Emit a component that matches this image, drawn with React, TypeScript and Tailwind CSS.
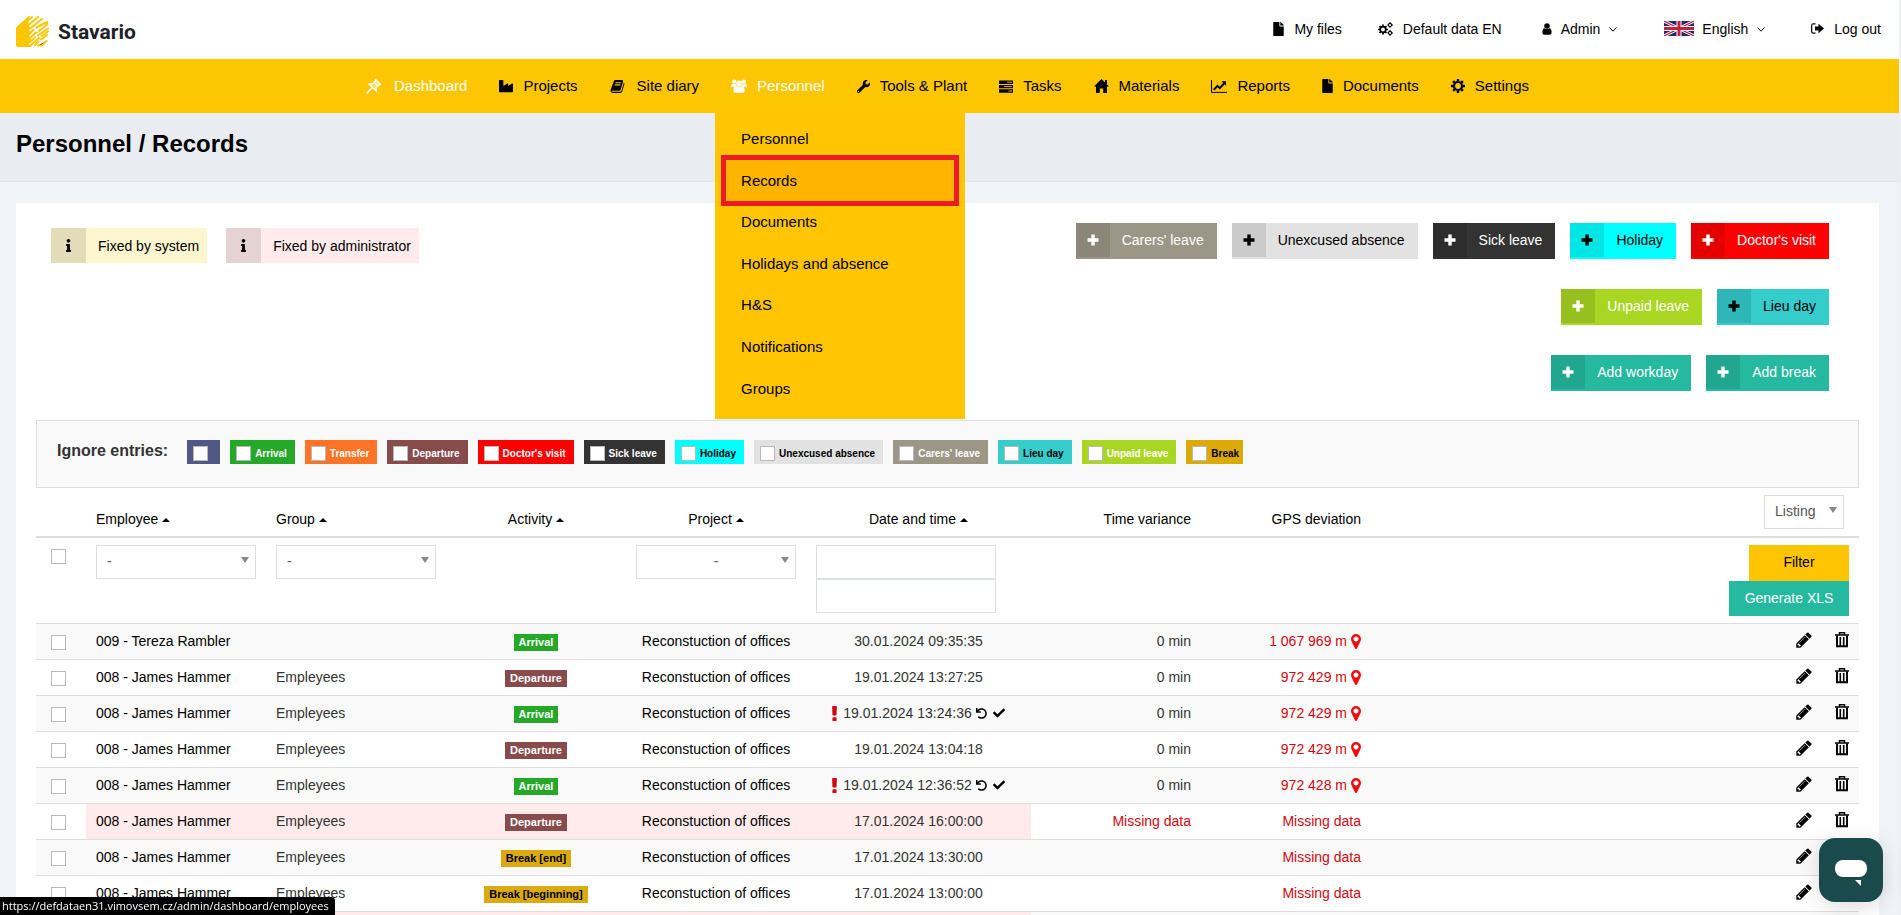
import { useState, type ReactNode } from "react";
import clsx from "clsx";
import { FaCheck, FaFile, FaIndustry, FaInfo, FaUndo, FaWrench } from "react-icons/fa";

interface IconProps {
  className?: string;
}

function PinIcon({ className }: IconProps) {
  return (
    <svg viewBox="0 0 16 16" fill="none" stroke="currentColor" strokeWidth="1.5" strokeLinejoin="round" className={className} aria-hidden="true">
      <path d="M9.500 1.500 14.500 6.500 12.500 7 10 9.800 10.200 13 3 5.800 6.200 6 9 3.500z" fill="currentColor" fillOpacity=".35" />
      <path d="M6.800 9.200 1 15M9.500 5.500l1 1" strokeLinecap="round" />
    </svg>
  );
}

function BookIcon({ className }: IconProps) {
  return (
    <svg viewBox="0 0 1792 1792" fill="currentColor" className={className} aria-hidden="true">
      <path d="M1703 478q40 57 18 129l-275 906q-19 64-76.500 107.500t-122.500 43.500h-923q-77 0-148.500-53.500t-99.500-131.500q-24-67-2-127 0-4 3-27t4-37q1-8-3-21.500t-3-19.500q2-11 8-21t16.500-23.500 16.500-23.500q23-38 45-91.500t30-91.500q3-10 .5-30t-.5-28q3-11 17-28t17-23q21-36 42-92t25-90q1-9-2.500-32t.5-28q4-13 22-30.500t22-22.500q19-26 42.500-84.500t27.500-96.500q1-8-3-25.500t-2-26.500q2-8 9-18t18-23 17-21q8-12 16.500-30.500t15-35 16-36 19.500-32 26.500-23.500 36-11.500 47.500 5.500l-1 3q38-9 51-9h761q74 0 114 56t18 130l-274 906q-36 119-71.500 153.500t-128.500 34.500h-869q-27 0-38 15-11 16-1 43 24 70 144 70h923q29 0 56-15.500t35-41.500l300-987q7-22 5-57 38 15 59 43zm-1064 2q-4 13 2 22.500t20 9.500h608q13 0 25.500-9.500t16.500-22.500l21-64q4-13-2-22.500t-20-9.500h-608q-13 0-25.500 9.500t-16.500 22.500zm-83 256q-4 13 2 22.500t20 9.500h608q13 0 25.500-9.500t16.500-22.500l21-64q4-13-2-22.500t-20-9.500h-608q-13 0-25.500 9.500t-16.500 22.500z" />
    </svg>
  );
}

function UsersIcon({ className }: IconProps) {
  return (
    <svg viewBox="0 0 16 14" fill="currentColor" className={className} aria-hidden="true">
      <circle cx="3.200" cy="2.600" r="2.200" />
      <circle cx="12.800" cy="2.600" r="2.200" />
      <circle cx="8" cy="4.500" r="2.900" />
      <path d="M.3 8.500V6.300q0-1.300 1.300-1.300h3q.3 2 1.600 3H.8zM15.700 8.500V6.300q0-1.300-1.300-1.300h-3q-.3 2-1.600 3h5.400z" />
      <path d="M2.500 12.300V10q0-2.600 2.600-2.600h5.800q2.600 0 2.600 2.600v2.300q0 1.400-1.400 1.400H3.900q-1.400 0-1.400-1.400z" />
    </svg>
  );
}

function TasksIcon({ className }: IconProps) {
  return (
    <svg viewBox="0 0 14 13" className={className} aria-hidden="true">
      <path fill="currentColor" d="M0 .5h14v3.400H0zM0 4.900h14v3.400H0zM0 9.300h14v3.400H0z" />
      <path stroke="#fcc602" strokeWidth=".9" d="M8 2.200h5M5 6.600h8M9.500 11H13" />
    </svg>
  );
}

function HomeIcon({ className }: IconProps) {
  return (
    <svg viewBox="0 0 15 14" fill="currentColor" className={className} aria-hidden="true">
      <path d="M7.500 0 15 7.500h-2V14H9.200V9.500H5.800V14H2V7.500H0z" />
      <path d="M11 1h2v4h-2z" />
    </svg>
  );
}

function ChartIcon({ className }: IconProps) {
  return (
    <svg viewBox="0 0 16 13" fill="none" stroke="currentColor" className={className} aria-hidden="true">
      <path d="M.5 0v12.400H16" />
      <path d="m2.800 9.800 3.700-3.900 2.300 2.200L13 3.500" strokeWidth="2" />
      <path d="M10.500 1.200H15v4.500z" fill="currentColor" stroke="none" />
    </svg>
  );
}

function CogIcon({ className }: IconProps) {
  return (
    <svg viewBox="0 0 14 14" fill="none" stroke="currentColor" className={className} aria-hidden="true">
      <circle cx="7" cy="7" r="4" strokeWidth="2.200" />
      <path d="M7 0v2.500M7 11.500V14M0 7h2.500M11.500 7H14M2.100 2.100l1.700 1.700M10.200 10.200l1.700 1.700M11.900 2.100l-1.700 1.700M3.800 10.200l-1.700 1.700" strokeWidth="2.400" />
    </svg>
  );
}

function CogsIcon({ className }: IconProps) {
  return (
    <svg viewBox="0 0 15 14" fill="none" stroke="currentColor" className={className} aria-hidden="true">
      <circle cx="5" cy="7.500" r="2.800" strokeWidth="1.700" />
      <path d="M5 2.500v2M5 10.500v2M0 7.500h2M8 7.500h2M1.500 4l1.400 1.400M7.100 9.600 8.500 11M8.500 4 7.100 5.400M2.900 9.600 1.500 11" strokeWidth="1.700" />
      <circle cx="12" cy="3" r="1.600" strokeWidth="1.100" />
      <circle cx="12" cy="11" r="1.600" strokeWidth="1.100" />
      <path d="M12 .2v1M12 4.800v1M9.500 3h.9M13.700 3h1M12 8.200v1M12 12.800v1M9.500 11h.9M13.700 11h1" strokeWidth="1.300" />
    </svg>
  );
}

function UserIcon({ className }: IconProps) {
  return (
    <svg viewBox="0 0 10 13" fill="currentColor" className={className} aria-hidden="true">
      <circle cx="5" cy="3.200" r="3" />
      <path d="M0 10.200Q0 5.800 2.400 5.600 5 7.600 7.600 5.600 10 5.800 10 10.200q0 2.500-2 2.500H2q-2 0-2-2.500z" />
    </svg>
  );
}

function SignOutIcon({ className }: IconProps) {
  return (
    <svg viewBox="0 0 13 11" className={className} aria-hidden="true">
      <path fill="none" stroke="currentColor" strokeWidth="1.200" d="M4.500.8H2.300Q.7.800.7 2.400v6.200q0 1.600 1.600 1.600h2.200" />
      <path fill="currentColor" d="M4 3.500h3.500V.8L13 5.500l-5.500 4.700V7.500H4z" />
    </svg>
  );
}

function ChevronIcon({ className }: IconProps) {
  return (
    <svg viewBox="0 0 8 5" fill="none" stroke="currentColor" className={className} aria-hidden="true">
      <path d="M.5.5 4 4.200 7.500.5" />
    </svg>
  );
}

function PlusIcon({ className }: IconProps) {
  return (
    <svg viewBox="0 0 12 12" fill="currentColor" className={className} aria-hidden="true">
      <path d="M4.300.5h3.400v3.800h3.800v3.400H7.700v3.800H4.300V7.700H.5V4.300h3.800z" />
    </svg>
  );
}

function ExclamationIcon({ className }: IconProps) {
  return (
    <svg viewBox="670 128 452 1408" fill="currentColor" className={className} aria-hidden="true">
      <path d="M1088 1248v224q0 26-19 45t-45 19h-256q-26 0-45-19t-19-45v-224q0-26 19-45t45-19h256q26 0 45 19t19 45zm30-1056l-28 768q-1 26-20.500 45t-45.500 19h-256q-26 0-45.500-19t-20.500-45l-28-768q-1-26 17.500-45t44.500-19h320q26 0 44.500 19t17.500 45z" />
    </svg>
  );
}

function MarkerIcon({ className }: IconProps) {
  return (
    <svg viewBox="384 128 1024 1536" fill="currentColor" className={className} aria-hidden="true">
      <path d="M1152 640q0-106-75-181t-181-75-181 75-75 181 75 181 181 75 181-75 75-181zm256 0q0 109-33 179l-364 774q-16 33-47.500 52t-67.500 19-67.500-19-46.500-52l-365-774q-33-70-33-179 0-212 150-362t362-150 362 150 150 362z" />
    </svg>
  );
}

function PencilIcon({ className }: IconProps) {
  return (
    <svg viewBox="0 0 1792 1792" fill="currentColor" className={className} aria-hidden="true">
      <path d="M491 1536l91-91-235-235-91 91v107h128v128h107zm523-928q0-22-22-22-10 0-17 7l-542 542q-7 7-7 17 0 22 22 22 10 0 17-7l542-542q7-7 7-17zm-54-192l416 416-832 832h-416v-416zm683 96q0 53-37 90l-166 166-416-416 166-165q36-38 90-38 53 0 91 38l235 234q37 39 37 91z" />
    </svg>
  );
}

function TrashIcon({ className }: IconProps) {
  return (
    <svg viewBox="0 0 14 16" fill="none" stroke="currentColor" className={className} aria-hidden="true">
      <path d="M0 3h14M4.500 2.800V.8h5v2" strokeWidth="1.500" />
      <path d="M2 3.500v10.700h10V3.500" strokeWidth="2" />
      <path d="M5.300 5v9M8.700 5v9" strokeWidth="1.600" />
    </svg>
  );
}

function UnionJack({ className }: IconProps) {
  return (
    <svg viewBox="0 0 60 30" preserveAspectRatio="none" className={className} aria-hidden="true">
      <path fill="#1b2a6b" d="M0 0h60v30H0z" />
      <path stroke="#fff" strokeWidth="6" d="m0 0 60 30M60 0 0 30" />
      <path stroke="#c8203c" strokeWidth="2.500" d="m0 0 60 30M60 0 0 30" />
      <path stroke="#fff" strokeWidth="10" d="M30 0v30M0 15h60" />
      <path stroke="#c8203c" strokeWidth="6" d="M30 0v30M0 15h60" />
    </svg>
  );
}

function LogoMark({ className }: IconProps) {
  return (
    <svg viewBox="0 0 34 31" className={className} aria-hidden="true">
      <path fill="#fcc602" d="M0 12.500q0-1 .8-1.800L11.500 1q1-1 2.500-1l-1 4-1 6 3 1-2 4 3 1-3 5 2 2-2 5 3 3H2q-2 0-2-2z" />
      <g stroke="#fcc602" strokeWidth="2" strokeLinecap="round">
        <path d="m11 5 5-4M12 9.500 22 1M14 12.500 26 3M14 17l3.500-3.200M20.500 11.500 31 6M14 22l6-5.500M23 15l8.500-7M14 26l5-4.500M22 19.500l10-7M15 29l8-7M25.500 20l6.500-4.500M19 29l3.500-3.500M25 23.500l6-4.500M22 29.500h4l4.500-4.500" />
      </g>
      <circle cx="21" cy="16.500" r="1" fill="#fcc602" />
    </svg>
  );
}

const NAV_ITEMS = [
  { label: "Dashboard", icon: <PinIcon className="mr-[2px] size-4" />, light: true },
  { label: "Projects", icon: <FaIndustry className="size-[14px]" /> },
  { label: "Site diary", icon: <BookIcon className="mr-[2px] size-[15px]" /> },
  { label: "Personnel", icon: <UsersIcon className="h-[14px] w-4" />, light: true, open: true },
  { label: "Tools & Plant", icon: <FaWrench className="size-[13px]" /> },
  { label: "Tasks", icon: <TasksIcon className="h-[13px] w-[14px]" /> },
  { label: "Materials", icon: <HomeIcon className="h-[14px] w-[15px]" /> },
  { label: "Reports", icon: <ChartIcon className="h-[13px] w-4" /> },
  { label: "Documents", icon: <FaFile className="h-[14px] w-[11px]" /> },
  { label: "Settings", icon: <CogIcon className="size-[14px]" /> },
];

const PERSONNEL_MENU = ["Personnel", "Records", "Documents", "Holidays and absence", "H&S", "Notifications", "Groups"];

const ADD_BUTTONS = [
  [
    { label: "Carers' leave", color: "bg-[#9c9686] text-white" },
    { label: "Unexcused absence", color: "bg-[#e2e2e2] text-black" },
    { label: "Sick leave", color: "bg-[#333333] text-white" },
    { label: "Holiday", color: "bg-[#00ffff] text-black" },
    { label: "Doctor's visit", color: "bg-[#ff0000] text-white" },
  ],
  [
    { label: "Unpaid leave", color: "bg-[#a9d622] text-white" },
    { label: "Lieu day", color: "bg-[#35cccc] text-black" },
  ],
  [
    { label: "Add workday", color: "bg-[#25b9a0] text-white" },
    { label: "Add break", color: "bg-[#25b9a0] text-white" },
  ],
];

const IGNORE_TAGS = [
  { label: "", color: "bg-[#525885] text-white" },
  { label: "Arrival", color: "bg-[#25a827] text-white" },
  { label: "Transfer", color: "bg-[#ff7326] text-white" },
  { label: "Departure", color: "bg-[#874b4b] text-white" },
  { label: "Doctor's visit", color: "bg-[#ff0000] text-white" },
  { label: "Sick leave", color: "bg-[#333333] text-white" },
  { label: "Holiday", color: "bg-[#00ffff] text-black" },
  { label: "Unexcused absence", color: "bg-[#e2e2e2] text-black" },
  { label: "Carers' leave", color: "bg-[#9c9686] text-white" },
  { label: "Lieu day", color: "bg-[#35cccc] text-black" },
  { label: "Unpaid leave", color: "bg-[#a9d622] text-white" },
  { label: "Break", color: "bg-[#dbaa06] text-black" },
];

const ACTIVITY_COLORS: Record<string, string> = {
  Arrival: "bg-[#25a827] text-white",
  Departure: "bg-[#874b4b] text-white",
  "Break [end]": "bg-[#d9ab10] text-black",
  "Break [beginning]": "bg-[#d9ab10] text-black",
};

interface RecordRow {
  employee: string;
  group: string;
  activity: string;
  date: string;
  variance: string;
  gps: string;
  fixed?: boolean;
  edited?: boolean;
}

const HAMMER = "008 - James Hammer";

const ROWS: RecordRow[] = [
  { employee: "009 - Tereza Rambler", group: "", activity: "Arrival", date: "30.01.2024 09:35:35", variance: "0 min", gps: "1 067 969 m" },
  { employee: HAMMER, group: "Empleyees", activity: "Departure", date: "19.01.2024 13:27:25", variance: "0 min", gps: "972 429 m" },
  { employee: HAMMER, group: "Empleyees", activity: "Arrival", date: "19.01.2024 13:24:36", variance: "0 min", gps: "972 429 m", edited: true },
  { employee: HAMMER, group: "Empleyees", activity: "Departure", date: "19.01.2024 13:04:18", variance: "0 min", gps: "972 429 m" },
  { employee: HAMMER, group: "Empleyees", activity: "Arrival", date: "19.01.2024 12:36:52", variance: "0 min", gps: "972 428 m", edited: true },
  { employee: HAMMER, group: "Empleyees", activity: "Departure", date: "17.01.2024 16:00:00", variance: "Missing data", gps: "Missing data", fixed: true },
  { employee: HAMMER, group: "Empleyees", activity: "Break [end]", date: "17.01.2024 13:30:00", variance: "", gps: "Missing data" },
  { employee: HAMMER, group: "Empleyees", activity: "Break [beginning]", date: "17.01.2024 13:00:00", variance: "", gps: "Missing data" },
  { employee: "", group: "", activity: "", date: "", variance: "", gps: "", fixed: true },
];

const CHECKBOX = "block size-[15px] appearance-none border border-[#b9b9b9] bg-white checked:bg-[#25b9a0]";

function TopLink({ icon, children, className }: { icon: ReactNode; children: ReactNode; className?: string }) {
  return (
    <a href="#" className={clsx("flex items-center", className)}>
      {icon}
      {children}
    </a>
  );
}

function InfoBadge({ label, color }: { label: string; color: string }) {
  return (
    <div className={clsx("flex h-[35px] items-center pr-2", color)}>
      <span className="mr-3 flex h-full w-[35px] items-center justify-center bg-black/10">
        <FaInfo className="size-[13px]" />
      </span>
      {label}
    </div>
  );
}

function AddButton({ label, color }: { label: string; color: string }) {
  return (
    <button type="button" className={clsx("flex h-9 items-start pr-[13px] leading-[34px]", color)}>
      <span className="mr-3 flex h-[34px] w-[34px] items-center justify-center bg-black/10">
        <PlusIcon className="size-3" />
      </span>
      {label}
    </button>
  );
}

function SelectBox({ label, option, className }: { label: string; option: string; className: string }) {
  return (
    <div className={clsx("relative h-[34px]", className)}>
      <select
        aria-label={label}
        className="h-full w-full appearance-none border border-[#dcdfe0] bg-white px-[10px] pb-[2px] text-[#555] [text-align:inherit] [text-align-last:inherit]"
      >
        <option>{option}</option>
      </select>
      <svg viewBox="0 0 8 6" className="pointer-events-none absolute top-3 right-[7px] h-[6px] w-2" aria-hidden="true">
        <path fill="#888" d="M0 0h8L4 6z" />
      </svg>
    </div>
  );
}

function SortHeader({ children }: { children: ReactNode }) {
  return (
    <button type="button" className="inline-flex items-center gap-1">
      {children}
      <svg viewBox="0 0 8 4" className="mt-[2px] h-1 w-2" aria-hidden="true">
        <path d="M0 4 4 0l4 4z" />
      </svg>
    </button>
  );
}

function RecordLine({ row, index }: { row: RecordRow; index: number }) {
  const tint = row.fixed && "bg-[#ffebeb]";

  return (
    <tr className="h-9 border-t border-[#ddd] odd:bg-[#f9f9f9]">
      <td className="pt-[2px] pl-[15px]">
        <input type="checkbox" aria-label={`Select record ${index + 1}`} className={CHECKBOX} />
      </td>
      <td className={clsx("px-[10px] text-black", tint)}>{row.employee}</td>
      <td className={clsx("px-[10px]", tint)}>{row.group}</td>
      <td className={clsx("text-center", tint)}>
        <span className={clsx("inline-block px-[5px] text-[11px] leading-[17px] font-bold", ACTIVITY_COLORS[row.activity])}>{row.activity}</span>
      </td>
      <td className={clsx("text-center text-black", tint)}>{row.employee ? "Reconstuction of offices" : null}</td>
      <td className={tint || undefined}>
        <span className="flex items-center justify-center">
          {row.edited ? <ExclamationIcon className="mr-[6px] h-[15px] w-[5px] text-[#d0080f]" /> : null}
          {row.date}
          {row.edited ? (
            <>
              <FaUndo className="mr-[6px] ml-1 size-[11px] text-black" />
              <FaCheck className="size-3 text-black" />
            </>
          ) : null}
        </span>
      </td>
      <td className={clsx("px-[10px] text-right", row.variance === "Missing data" && "text-[#d0080f]")}>{row.variance}</td>
      <td className="px-[10px] text-[#d0080f]">
        <span className="flex items-center justify-end gap-1">
          {row.gps}
          {row.gps.endsWith(" m") ? <MarkerIcon className="h-[15px] w-[10px] text-[#ee1010]" /> : null}
        </span>
      </td>
      <td className="px-[10px] pb-[2px]">
        <span className="flex items-center justify-end gap-[22px] text-black">
          <button type="button" aria-label="Edit">
            <PencilIcon className="size-[18px]" />
          </button>
          <button type="button" aria-label="Delete">
            <TrashIcon className="h-4 w-[14px]" />
          </button>
        </span>
      </td>
    </tr>
  );
}

export default function App() {
  const [menuOpen, setMenuOpen] = useState(true);

  return (
    <div className="h-screen overflow-y-auto border-r-2 border-[#eceef0] bg-[#f0f4f9] font-['Liberation_Sans',Arial,sans-serif] text-sm text-[#333] [scrollbar-width:none]">
      <header className="flex h-[59px] items-center justify-between bg-white pr-[18px] pl-4 text-black">
        <a href="#" className="flex items-center gap-2 pt-1 font-['Roboto',sans-serif] text-[21px] font-bold text-[#1c2227]">
          <LogoMark className="h-[31px] w-[34px]" />
          Stavario
        </a>
        <div className="flex items-center pb-[2px]">
          <TopLink icon={<FaFile className="mr-[10px] h-[14px] w-[11px]" />}>My files</TopLink>
          <TopLink className="ml-9" icon={<CogsIcon className="mr-[10px] h-[14px] w-[15px]" />}>Default data EN</TopLink>
          <TopLink className="ml-10" icon={<UserIcon className="mr-[9px] h-3 w-[10px]" />}>
            Admin
            <ChevronIcon className="mt-[2px] ml-[9px] h-[5px] w-2" />
          </TopLink>
          <TopLink className="ml-[47px]" icon={<UnionJack className="mr-2 h-[15px] w-[30px]" />}>
            English
            <ChevronIcon className="mt-[2px] ml-[9px] h-[5px] w-2" />
          </TopLink>
          <TopLink className="ml-[46px]" icon={<SignOutIcon className="mr-[10px] h-[11px] w-[13px]" />}>Log out</TopLink>
        </div>
      </header>

      <nav className="flex h-[54px] justify-center bg-[#fcc602] pr-1 text-[15px] text-black">
        {NAV_ITEMS.map((item) => (
          <div key={item.label} className="relative flex">
            <a
              href="#"
              onClick={item.open ? () => setMenuOpen(!menuOpen) : undefined}
              className={clsx("flex items-center gap-[10px] px-4", item.light && "text-white")}
            >
              {item.icon}
              {item.label}
            </a>
            {item.open && menuOpen ? (
              <ul className="absolute top-full left-0 z-10 flex h-[306px] w-[250px] flex-col bg-[#ffc502] pt-[5px] pb-[10px] text-black">
                {PERSONNEL_MENU.map((entry) => (
                  <li key={entry} className="flex-1 px-[11px]">
                    <a
                      href="#"
                      className={clsx("flex h-full items-center px-[15px]", entry === "Records" && "bg-[#ffb400] outline-5 outline-[#ed1c24]")}
                    >
                      {entry}
                    </a>
                  </li>
                ))}
              </ul>
            ) : null}
          </div>
        ))}
      </nav>

      <div className="h-[69px] border-b border-[#dfe3e8] bg-[#e9ecf0] px-4 pt-[15px]">
        <h1 className="text-2xl font-bold text-black">Personnel / Records</h1>
      </div>

      <main className="mt-[21px] mr-5 ml-4 bg-white px-5 pt-5">
        <div className="flex items-start justify-between pr-[30px] pl-[15px] text-black">
          <div className="flex gap-[19px] pt-[5px]">
            <InfoBadge label="Fixed by system" color="bg-[#fdf5ce]" />
            <InfoBadge label="Fixed by administrator" color="bg-[#ffebeb]" />
          </div>
          <div className="flex flex-col items-end gap-[30px]">
            {ADD_BUTTONS.map((group) => (
              <div key={group[0].label} className="flex gap-[15px]">
                {group.map((button) => (
                  <AddButton key={button.label} {...button} />
                ))}
              </div>
            ))}
          </div>
        </div>

        <fieldset className="mt-[29px] flex h-[68px] items-start border border-[#ddd] bg-[#f9f9f9] px-5 pt-[19px]">
          <span className="mr-[19px] text-base leading-[22px] font-bold">Ignore entries:</span>
          <div className="flex gap-[10px]">
            {IGNORE_TAGS.map((tag) => (
              <label key={tag.label} className={clsx("flex h-6 items-center gap-1 pt-[3px] pl-[6px] text-[10px] font-bold last:pr-1", tag.label ? "pr-2" : "pr-3", tag.color)}>
                <input type="checkbox" aria-label={tag.label || "Unnamed"} className={CHECKBOX} />
                {tag.label ? <span className="pt-[2px]">{tag.label}</span> : null}
              </label>
            ))}
          </div>
        </fieldset>

        <table className="w-full table-fixed border-collapse">
          <colgroup>
            <col className="w-[50px]" />
            <col className="w-[180px]" />
            <col className="w-[180px]" />
            <col className="w-[180px]" />
            <col className="w-[180px]" />
            <col className="w-[225px]" />
            <col className="w-[170px]" />
            <col className="w-[170px]" />
            <col />
          </colgroup>
          <thead className="text-black">
            <tr className="h-[49px] border-b-2 border-[#ddd] [&>th]:px-[10px] [&>th]:pt-[13px] [&>th]:font-normal">
              <th />
              <th className="text-left"><SortHeader>Employee</SortHeader></th>
              <th className="text-left"><SortHeader>Group</SortHeader></th>
              <th><SortHeader>Activity</SortHeader></th>
              <th><SortHeader>Project</SortHeader></th>
              <th><SortHeader>Date and time</SortHeader></th>
              <th className="text-right">Time variance</th>
              <th className="text-right">GPS deviation</th>
              <th className="pt-0! pr-[15px]!">
                <SelectBox label="Listing" option="Listing" className="ml-auto w-20 text-left" />
              </th>
            </tr>
            <tr className="h-[86px] align-top [&>td]:px-[10px] [&>td]:pt-[7px]">
              <td className="pt-[11px]! pl-[15px]!">
                <input type="checkbox" aria-label="Select all records" className={CHECKBOX} />
              </td>
              <td><SelectBox label="Employee" option="-" className="w-40" /></td>
              <td><SelectBox label="Group" option="-" className="w-40" /></td>
              <td />
              <td><SelectBox label="Project" option="-" className="w-40 text-center" /></td>
              <td>
                <input type="text" aria-label="Date from" className="block h-[34px] w-[180px] border border-[#dcdfe0] px-2" />
                <input type="text" aria-label="Date to" className="block h-[34px] w-[180px] border border-[#dcdfe0] px-2" />
              </td>
              <td />
              <td />
              <td>
                <div className="flex flex-col items-end">
                  <button type="button" className="h-9 w-[100px] bg-[#ffc502] pb-[2px]">Filter</button>
                  <button type="button" className="h-[35px] w-[120px] bg-[#25b9a0] pb-[2px] text-white">Generate XLS</button>
                </div>
              </td>
            </tr>
          </thead>
          <tbody>
            {ROWS.map((row, index) => (
              <RecordLine key={index} row={row} index={index} />
            ))}
          </tbody>
        </table>
      </main>

      <div className="fixed bottom-0 left-0 h-[18px] rounded-tr-sm bg-black pr-[6px] pl-[2px] font-['Open_Sans',sans-serif] text-[11px] leading-[17px] text-white">
        https://defdataen31.vimovsem.cz/admin/dashboard/employees
      </div>

      <button
        type="button"
        aria-label="Open chat"
        className="fixed right-[18px] bottom-[13px] flex size-16 items-center justify-center rounded-2xl bg-[#1a4a4c] shadow-[0_4px_20px_rgba(0,0,0,0.15)]"
      >
        <svg viewBox="0 0 32 26" className="mt-[5px] h-[26px] w-8" fill="#fff" aria-hidden="true">
          <rect width="32" height="17" rx="8" />
          <path d="M20 20h6v6z" />
        </svg>
      </button>
    </div>
  );
}
